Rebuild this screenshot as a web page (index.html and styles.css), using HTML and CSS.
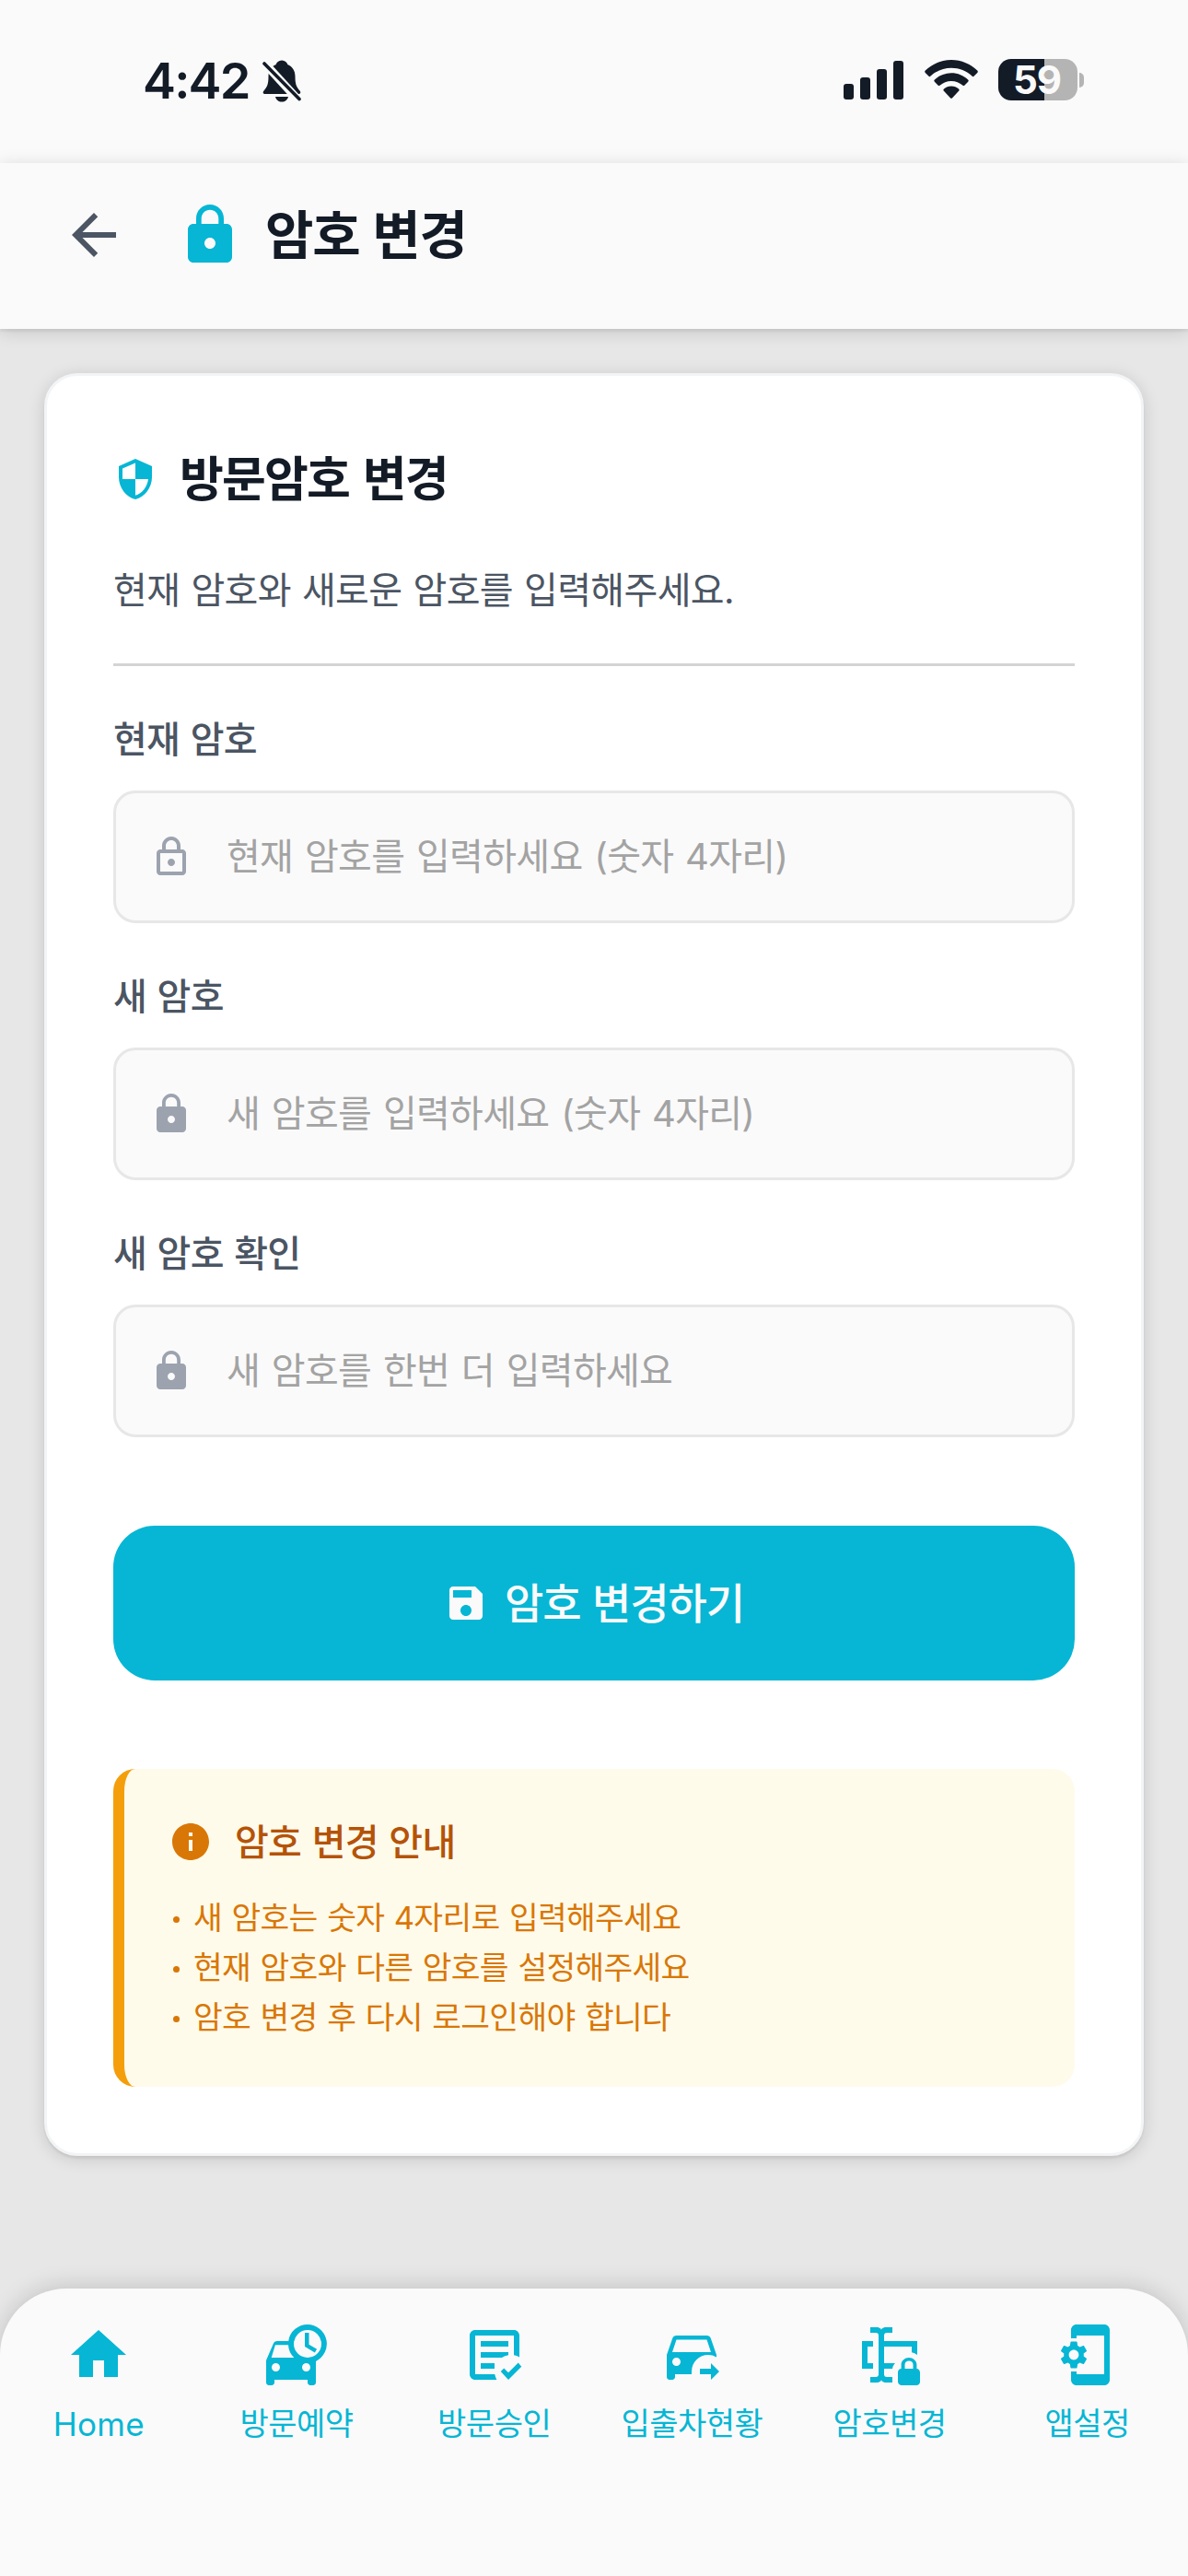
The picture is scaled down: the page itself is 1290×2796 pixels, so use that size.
FILE: index.html
```html
<!DOCTYPE html>
<html lang="ko">
<head>
    <meta charset="UTF-8">
    <title>암호 변경</title>
    <link rel="stylesheet" href="styles.css">
</head>
<body>
<div class="status">
    <div class="status-left">
        <span class="time">4:42</span>
        <svg class="bell" viewBox="0 0 42 46">
            <path d="M21 0.5c3.600 0 5.500 2.200 6.300 4.600 5.200 2.200 8.200 6.600 8.200 12.900 0 8.500 1.500 11.500 5 15.500 1.500 1.800 0.800 3.500-1.200 3.500H2.700c-2 0-2.700-1.800-1.200-3.500 3.500-4 5-7 5-15.500 0-6.300 3-10.700 8.200-12.900C15.500 2.700 17.400.5 21 .5z"/>
            <path d="M14 40h14c-.8 3.500-3.500 5.500-7 5.500s-6.200-2-7-5.500z"/>
            <path class="slash-gap" d="M0 1l42 46"/>
            <path class="slash" d="M2 4l38 38.500"/>
        </svg>
    </div>
    <div class="status-right">
        <svg class="signal" viewBox="0 0 65 42">
            <rect x="0" y="25" width="11" height="17" rx="3"/>
            <rect x="18" y="18" width="11" height="24" rx="3"/>
            <rect x="36" y="9" width="11" height="33" rx="3"/>
            <rect x="54" y="0" width="11" height="42" rx="3"/>
        </svg>
        <svg class="wifi" viewBox="0 0 58 42">
            <path d="M29 0c11 0 21 4.500 28.200 11.600.8.800.8 1.600.1 2.300l-3.600 3.700c-.7.700-1.500.7-2.200 0C45.500 12 37.500 8.800 29 8.800S12.500 12 6.500 17.600c-.7.700-1.500.7-2.200 0L.7 13.900c-.7-.7-.7-1.500.1-2.300C8 4.500 18 0 29 0z"/>
            <path d="M29 14.300c7 0 13.300 2.700 18.100 7.100.8.700.8 1.600.1 2.300l-3.700 3.800c-.7.700-1.500.7-2.300 0-3.300-2.900-7.500-4.600-12.200-4.600s-8.900 1.700-12.200 4.600c-.8.700-1.600.7-2.300 0l-3.700-3.800c-.7-.7-.7-1.600.1-2.300 4.800-4.400 11.100-7.100 18.100-7.100z"/>
            <path d="M29 28.500c3.100 0 5.900 1.200 8 3.100.8.700.8 1.500.1 2.200l-7 7.500c-.7.700-1.500.7-2.200 0l-7-7.500c-.7-.7-.7-1.500.1-2.200 2.100-1.900 4.900-3.100 8-3.100z"/>
        </svg>
        <div class="battery"><span>59</span></div>
        <i class="battery-nub"></i>
    </div>
</div>

<div class="header">
    <svg class="icon-l back" viewBox="0 0 24 24"><path d="M20 11H7.830l5.590-5.590L12 4l-8 8 8 8 1.410-1.410L7.830 13H20v-2z"/></svg>
    <svg class="icon-l lock" viewBox="0 0 24 24"><path d="M18 8h-1V6c0-2.760-2.240-5-5-5S7 3.240 7 6v2H6c-1.100 0-2 .9-2 2v10c0 1.100.9 2 2 2h12c1.100 0 2-.9 2-2V10c0-1.100-.9-2-2-2zm-6 9c-1.100 0-2-.9-2-2s.9-2 2-2 2 .9 2 2-.9 2-2 2zm3.100-9H8.900V6c0-1.710 1.390-3.100 3.100-3.100 1.710 0 3.100 1.390 3.100 3.100v2z"/></svg>
    <h1>암호 변경</h1>
</div>

<div class="content">
    <div class="card">
        <div class="card-title">
            <svg class="icon-s" viewBox="0 0 24 24"><path d="M12 1L3 5v6c0 5.550 3.840 10.740 9 12 5.160-1.260 9-6.450 9-12V5l-9-4zm0 10.990h7c-.53 4.120-3.280 7.790-7 8.940V12H5V6.300l7-3.110v8.800z"/></svg>
            <h2>방문암호 변경</h2>
        </div>
        <p class="desc">현재 암호와 새로운 암호를 입력해주세요.</p>

        <div class="field">
            <label for="cur">현재 암호</label>
            <div class="input">
                <svg class="icon-s" viewBox="0 0 24 24"><path d="M18 8h-1V6c0-2.760-2.240-5-5-5S7 3.240 7 6v2H6c-1.100 0-2 .9-2 2v10c0 1.100.9 2 2 2h12c1.100 0 2-.9 2-2V10c0-1.100-.9-2-2-2zM9 6c0-1.660 1.340-3 3-3s3 1.340 3 3v2H9V6zm9 14H6V10h12v10zm-6-3c1.100 0 2-.9 2-2s-.9-2-2-2-2 .9-2 2 .9 2 2 2z"/></svg>
                <input id="cur" type="text" placeholder="현재 암호를 입력하세요 (숫자 4자리)">
            </div>
        </div>
        <div class="field">
            <label for="new1">새 암호</label>
            <div class="input">
                <svg class="icon-s" viewBox="0 0 24 24"><path d="M18 8h-1V6c0-2.760-2.240-5-5-5S7 3.240 7 6v2H6c-1.100 0-2 .9-2 2v10c0 1.100.9 2 2 2h12c1.100 0 2-.9 2-2V10c0-1.100-.9-2-2-2zm-6 9c-1.100 0-2-.9-2-2s.9-2 2-2 2 .9 2 2-.9 2-2 2zm3.100-9H8.900V6c0-1.710 1.390-3.100 3.100-3.100 1.710 0 3.100 1.390 3.100 3.100v2z"/></svg>
                <input id="new1" type="text" placeholder="새 암호를 입력하세요 (숫자 4자리)">
            </div>
        </div>
        <div class="field">
            <label for="new2">새 암호 확인</label>
            <div class="input">
                <svg class="icon-s" viewBox="0 0 24 24"><path d="M18 8h-1V6c0-2.760-2.240-5-5-5S7 3.240 7 6v2H6c-1.100 0-2 .9-2 2v10c0 1.100.9 2 2 2h12c1.100 0 2-.9 2-2V10c0-1.100-.9-2-2-2zm-6 9c-1.100 0-2-.9-2-2s.9-2 2-2 2 .9 2 2-.9 2-2 2zm3.100-9H8.900V6c0-1.710 1.390-3.100 3.100-3.100 1.710 0 3.100 1.390 3.100 3.100v2z"/></svg>
                <input id="new2" type="text" placeholder="새 암호를 한번 더 입력하세요">
            </div>
        </div>

        <button class="submit" type="button">
            <svg class="icon-s" viewBox="0 0 24 24"><path d="M17 3H5c-1.110 0-2 .9-2 2v14c0 1.100.89 2 2 2h14c1.100 0 2-.9 2-2V7l-4-4zm-5 16c-1.660 0-3-1.340-3-3s1.340-3 3-3 3 1.340 3 3-1.340 3-3 3zm3-10H5V5h10v4z"/></svg>
            <span>암호 변경하기</span>
        </button>

        <div class="notice">
            <div class="notice-title">
                <svg class="icon-s" viewBox="0 0 24 24"><path d="M12 2C6.480 2 2 6.480 2 12s4.480 10 10 10 10-4.480 10-10S17.520 2 12 2zm1 15h-2v-6h2v6zm0-8h-2V7h2v2z"/></svg>
                <h3>암호 변경 안내</h3>
            </div>
            <ul>
                <li>새 암호는 숫자 4자리로 입력해주세요</li>
                <li>현재 암호와 다른 암호를 설정해주세요</li>
                <li>암호 변경 후 다시 로그인해야 합니다</li>
            </ul>
        </div>
    </div>
</div>

<div class="nav">
    <a class="home">
        <svg class="icon-l" viewBox="0 0 24 24"><path d="M10 20v-6h4v6h5v-8h3L12 3 2 12h3v8z"/></svg>
        <span>Home</span>
    </a>
    <a>
        <svg class="icon-l" viewBox="0 0 24 24"><path fill-rule="evenodd" d="M16 1a7 7 0 0 0-6.930 6H5c-.66 0-1.220.42-1.420 1L1 14v8c0 .55.450 1 1 1h1c.55 0 1-.45 1-1v-1h12v1c0 .55.450 1 1 1h1c.55 0 1-.45 1-1v-7.700A7 7 0 0 0 16 1zm0 2a5 5 0 1 1 0 10 5 5 0 0 1 0-10zM4.300 8.400h4.710A7 7 0 0 0 11.100 13H2.900zM4.500 15a1.500 1.500 0 1 1 0 3 1.500 1.500 0 0 1 0-3zm11 0a1.500 1.500 0 1 1 0 3 1.500 1.500 0 0 1 0-3z"/><path d="M15 4v5l3.610 2.160.75-1.220-2.860-1.690V4H15z"/></svg>
        <span>방문예약</span>
    </a>
    <a>
        <svg class="icon-l" viewBox="0 0 24 24"><path d="M17 21l-2.750-3 1.160-1.160L17 18.430l3.590-3.590 1.160 1.410M12.800 21H5c-1.110 0-2-.89-2-2V5c0-1.110.89-2 2-2h14c1.110 0 2 .89 2 2v7.800c-.61-.35-1.280-.6-2-.72V5H5v14h7.080c.12.720.37 1.390.72 2M12 17H7v-2h5m2.680-2H7v-2h10v1.080c-.85.140-1.630.460-2.320.92M17 9H7V7h10"/></svg>
        <span>방문승인</span>
    </a>
    <a>
        <svg class="icon-l" viewBox="0 0 24 24"><path fill-rule="evenodd" d="M6.500 5h11c.66 0 1.220.42 1.420 1L21 12v.8A6.200 6.200 0 0 0 18 12a6 6 0 0 0-6 6v1H6v1c0 .55-.45 1-1 1H4c-.55 0-1-.45-1-1v-8l2.080-6c.2-.58.760-1 1.420-1zm0 1.500L5 11h14l-1.500-4.500zm0 6.500a1.500 1.500 0 1 0 0 3 1.500 1.500 0 0 0 0-3z"/><path d="M19 21v-2h-4v-2h4v-2l3 3z"/></svg>
        <span>입출차현황</span>
    </a>
    <a>
        <svg class="icon-l" viewBox="0 0 24 24"><path d="M10 7h12v5c-.55-.45-1.250-.8-2-.95V9H10v6h4c-.5.500-.9 1.200-1 2h-3v2a1 1 0 0 0 1 1h2v2h-2.500C9.950 22 9 21.550 9 21c0 .55-.95 1-1.500 1H5v-2h2a1 1 0 0 0 1-1V5a1 1 0 0 0-1-1H5V2h2.500C8.050 2 9 2.450 9 3c0-.55.950-1 1.500-1H13v2h-2a1 1 0 0 0-1 1zM2 7h4v2H4v6h2v2H2z"/><path d="M21.800 17v-1.500c0-1.400-1.400-2.500-2.800-2.500s-2.800 1.100-2.800 2.500V17c-.6 0-1.200.6-1.200 1.200v3.500c0 .7.600 1.300 1.200 1.300h5.500c.7 0 1.300-.6 1.300-1.200v-3.500c0-.7-.6-1.300-1.200-1.300m-1.300 0h-3v-1.500c0-.8.700-1.300 1.500-1.300s1.500.5 1.500 1.300z"/></svg>
        <span>암호변경</span>
    </a>
    <a>
        <svg class="icon-l" viewBox="0 0 24 24"><path d="M18 1H8c-1.110 0-2 .89-2 2v3h2V5h10v14H8v-1H6v3c0 1.110.89 2 2 2h10c1.110 0 2-.89 2-2V3c0-1.110-.89-2-2-2z"/><path transform="translate(1 6) scale(.5)" d="M19.140 12.940c.04-.3.060-.61.060-.94 0-.32-.02-.64-.07-.94l2.030-1.580c.18-.14.230-.41.120-.61l-1.920-3.320c-.12-.22-.37-.29-.59-.22l-2.390.96c-.5-.38-1.030-.7-1.620-.94l-.36-2.540c-.04-.24-.24-.41-.48-.41h-3.840c-.24 0-.43.170-.47.410l-.36 2.540c-.59.240-1.130.570-1.620.94l-2.390-.96c-.22-.08-.47 0-.59.220L2.740 8.870c-.12.210-.08.470.12.610l2.030 1.580c-.05.300-.09.630-.09.940s.02.640.07.940l-2.030 1.580c-.18.140-.23.410-.12.610l1.920 3.320c.12.220.37.290.59.220l2.390-.96c.5.380 1.030.7 1.620.94l.36 2.540c.05.240.24.410.48.410h3.840c.24 0 .44-.17.470-.41l.36-2.540c.59-.24 1.130-.56 1.620-.94l2.390.96c.22.080.47 0 .59-.22l1.920-3.320c.12-.22.070-.47-.12-.61l-2.010-1.580zM12 15.600c-1.980 0-3.600-1.620-3.600-3.600s1.620-3.600 3.600-3.600 3.600 1.620 3.600 3.600-1.620 3.600-3.600 3.600z"/></svg>
        <span>앱설정</span>
    </a>
</div>
</body>
</html>
```
FILE: styles.css
```css
*{
    margin : 0;
    padding: 0;
    box-sizing: border-box;
}
body{
    display: flex;
    flex-direction: column;
    width : 1290px;
    height: 2796px;
    overflow: hidden;
    background: #e7e7e7;
    color: #131b26;
    font-family: Inter, "Noto Sans CJK KR", sans-serif;
}
svg{
    display: block;
    flex: none;
    fill: currentColor;
}
.icon-l{
    width : 72px;
    height: 72px;
}
.icon-s{
    width : 48px;
    height: 48px;
}

/* status bar */
.status{
    display: flex;
    justify-content: space-between;
    height: 177px;
    padding: 64px 113px 0 155px;
    background: #fafafa;
}
.status-left, .status-right{
    display: flex;
    align-items: flex-start;
}
.time{
    width: 130px;
    font: 600 54px/48px Inter, sans-serif;
    letter-spacing: -1.8px;
}
.bell{
    width : 42px;
    height: 46px;
    margin-top: 1px;
}
.bell .slash-gap{
    stroke: #fafafa;
    stroke-width: 9;
}
.bell .slash{
    stroke: #131b26;
    stroke-width: 3.600;
    stroke-linecap: round;
}
.signal{
    width : 65px;
    height: 42px;
    margin: 2px 23px 0 0;
}
.wifi{
    width : 58px;
    height: 42px;
    margin: 1px 22px 0 0;
}
.battery{
    width : 86px;
    height: 45px;
    padding-right: 2px;
    border-radius: 14px;
    background: linear-gradient(to right, #131b26 50px, #b4b4b4 50px);
    color: #fafafa;
    font: 700 42px/46px Inter, sans-serif;
    letter-spacing: -1px;
    text-align: center;
}
.battery-nub{
    width : 5px;
    height: 16px;
    margin: 15px 0 0 2px;
    border-radius: 0 5px 5px 0;
    background: #b4b4b4;
}

/* header */
.header{
    position: relative;
    display: flex;
    align-items: center;
    height: 180px;
    padding: 0 66px 24px;
    background: #fafafa;
    box-shadow: 0 3px 2px rgba(0,0,0,.05), 0 3px 18px rgba(0,0,0,.15);
}
.back{
    color: #4b5563;
}
.lock{
    margin: 0 24px 0 54px;
    color: #06b6d4;
}
h1{
    padding-top: 1px;
    font-size: 57px;
    font-weight: 700;
    letter-spacing: -1.2px;
    line-height: 80px;
    word-spacing: 1.5px;
}

/* card */
.content{
    flex: 1;
    padding: 48px 48px 0;
}
.card{
    height: 1935px;
    padding: 72px;
    border: 3px solid #f3f4f6;
    border-radius: 36px;
    background: #fff;
    box-shadow: 0 3px 2px rgba(0,0,0,.05), 0 3px 18px rgba(0,0,0,.15);
}
.card-title{
    display: flex;
    align-items: center;
    gap: 24px;
    height: 80px;
}
.card-title .icon-s{
    color: #06b6d4;
}
h2{
    padding-top: 2px;
    font-size: 52px;
    letter-spacing: -1.8px;
    line-height: 80px;
    word-spacing: 4px;
}
.desc{
    height: 163px;
    padding-top: 51px;
    border-bottom: 3px solid #d4d4d4;
    color: #4b5563;
    font-size: 40px;
    letter-spacing: -.65px;
    line-height: 60px;
    word-spacing: 1.5px;
}
.field{
    height: 279px;
    padding-top: 50px;
}
.field label{
    display: block;
    height: 85px;
    color: #4b5563;
    font-size: 40px;
    font-weight: 500;
    letter-spacing: -.7px;
    line-height: 60px;
    word-spacing: 1.5px;
}
.input{
    display: flex;
    align-items: center;
    gap: 36px;
    height: 144px;
    padding: 0 36px;
    border: 3px solid #e7e7e7;
    border-radius: 24px;
    background: #fafafa;
    color: #9ca3af;
}
.input input{
    flex: 1;
    height: 60px;
    border: 0;
    outline: none;
    background: none;
    font: 400 40px/60px Inter, "Noto Sans CJK KR", sans-serif;
    letter-spacing: -.7px;
    word-spacing: 2.2px;
}
.input input::placeholder{
    color: #a3a3a3;
    line-height: 60px;
}
.submit{
    display: flex;
    align-items: center;
    justify-content: center;
    gap: 18px;
    width: 100%;
    height: 168px;
    margin-top: 96px;
    border: 0;
    border-radius: 45px;
    background: #06b6d4;
    color: #fafafa;
    font: 500 46px/70px Inter, "Noto Sans CJK KR", sans-serif;
    letter-spacing: -1.1px;
    word-spacing: 1.5px;
}

/* notice */
.notice{
    height: 345px;
    margin-top: 96px;
    padding: 48px;
    border-left: 12px solid #f59e0b;
    border-radius: 24px;
    background: #fffbeb;
    color: #d97706;
}
.notice-title{
    display: flex;
    align-items: center;
    gap: 24px;
    height: 62px;
}
h3{
    padding-top: 1px;
    color: #b45309;
    font-size: 40px;
    font-weight: 500;
    letter-spacing: -.7px;
    line-height: 60px;
    word-spacing: 1.5px;
}
.notice ul{
    padding-top: 25px;
    list-style: none;
}
.notice li{
    display: flex;
    align-items: center;
    gap: 15px;
    height: 54px;
    padding-left: 5px;
    font-size: 34.5px;
    letter-spacing: -.7px;
    line-height: 54px;
    word-spacing: 1.5px;
}
.notice li::before{
    content: "";
    width : 7px;
    height: 7px;
    margin-top: 3px;
    border-radius: 50%;
    background: #d97706;
}

/* bottom tabs */
.nav{
    display: grid;
    grid-template-columns: repeat(6, 1fr);
    height: 312px;
    padding: 36px 2px 0 0;
    border-radius: 72px 72px 0 0;
    background: #fafafa;
    box-shadow: 0 -3px 24px rgba(0,0,0,.15);
}
.nav a{
    display: flex;
    flex-direction: column;
    align-items: center;
    gap: 12px;
    color: #06b6d4;
    font-size: 34px;
    letter-spacing: -.5px;
    line-height: 54px;
    white-space: nowrap;
}
.nav .home{
    font-size: 35px;
    letter-spacing: .3px;
}
```
